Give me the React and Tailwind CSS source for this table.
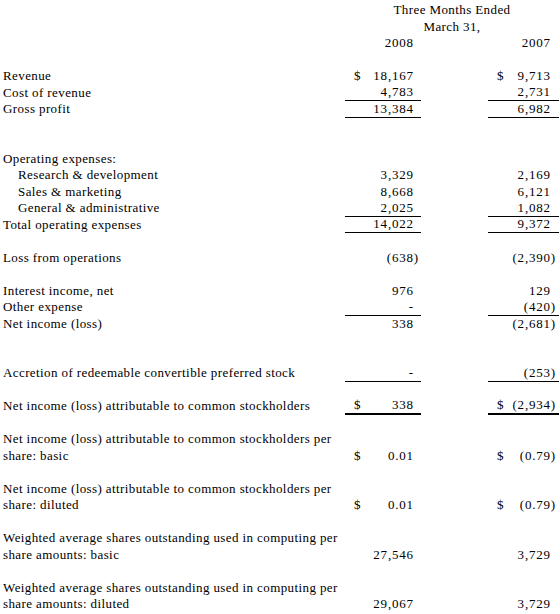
import React from "react";

function Val({ v }) {
  if (v === undefined || v === null) return null;
  const neg = v.endsWith(")");
  return (
    <span className="whitespace-pre tracking-[0.8px]">
      {v}
      {!neg && <span className="invisible">)</span>}
    </span>
  );
}

function Cell({ v, dollar, line, w, pr }) {
  const border =
    line === "double"
      ? "border-b-2 border-black"
      : line === "single"
      ? "border-b border-black"
      : "";
  return (
    <div
      className={`${w} h-full flex items-center justify-between pl-[9px] ${pr} ${border}`}
    >
      <span>{dollar ? "$" : ""}</span>
      <Val v={v} />
    </div>
  );
}

function Row({ label, indent, a, b, line, dollar }) {
  return (
    <div className="flex h-[16.5px] leading-[16.5px]">
      <div
        className={`w-[345px] shrink-0 whitespace-nowrap ${
          indent ? "pl-[18px]" : "pl-[3px]"
        }`}
      >
        {label}
      </div>
      <Cell v={a} dollar={dollar} line={line} w="w-[76px] shrink-0" pr="pr-[2px]" />
      <div className="w-[67px] shrink-0" />
      <Cell v={b} dollar={dollar} line={line} w="w-[71px] shrink-0" pr="pr-[3px]" />
    </div>
  );
}

function Blank() {
  return <div className="h-[16.5px]" />;
}

export default function App() {
  return (
    <div
      className="w-[560px] h-[614px] bg-white text-black text-[13px] tracking-[0.4px] pt-[2px] overflow-hidden"
      style={{ fontFamily: '"Liberation Serif", "Times New Roman", serif' }}
    >
      <div className="flex h-[16.5px] leading-[16.5px]">
        <div className="w-[345px] shrink-0" />
        <div className="w-[214px] text-center">Three Months Ended</div>
      </div>
      <div className="flex h-[16.5px] leading-[16.5px]">
        <div className="w-[345px] shrink-0" />
        <div className="w-[214px] text-center">March 31,</div>
      </div>
      <Row a="2008" b="2007" />
      <Blank />
      <Row label="Revenue" a="18,167" b="9,713" dollar />
      <Row label="Cost of revenue" a="4,783" b="2,731" line="single" />
      <Row label="Gross profit" a="13,384" b="6,982" line="single" />
      <Blank />
      <Blank />
      <Row label="Operating expenses:" />
      <Row label="Research & development" indent a="3,329" b="2,169" />
      <Row label="Sales & marketing" indent a="8,668" b="6,121" />
      <Row label="General & administrative" indent a="2,025" b="1,082" line="single" />
      <Row label="Total operating expenses" a="14,022" b="9,372" line="single" />
      <Blank />
      <Row label="Loss from operations" a="(638)" b="(2,390)" />
      <Blank />
      <Row label="Interest income, net" a="976" b="129" />
      <Row label="Other expense" a="-" b="(420)" line="single" />
      <Row label="Net income (loss)" a="338" b="(2,681)" />
      <Blank />
      <Blank />
      <Row label="Accretion of redeemable convertible preferred stock" a="-" b="(253)" line="single" />
      <Blank />
      <Row
        label="Net income (loss) attributable to common stockholders"
        a="338"
        b="(2,934)"
        dollar
        line="double"
      />
      <Blank />
      <Row label="Net income (loss) attributable to common stockholders per" />
      <Row label="share: basic" a="0.01" b="(0.79)" dollar />
      <Blank />
      <Row label="Net income (loss) attributable to common stockholders per" />
      <Row label="share: diluted" a="0.01" b="(0.79)" dollar />
      <Blank />
      <Row label="Weighted average shares outstanding used in computing per" />
      <Row label="share amounts: basic" a="27,546" b="3,729" />
      <Blank />
      <Row label="Weighted average shares outstanding used in computing per" />
      <Row label="share amounts: diluted" a="29,067" b="3,729" />
    </div>
  );
}
